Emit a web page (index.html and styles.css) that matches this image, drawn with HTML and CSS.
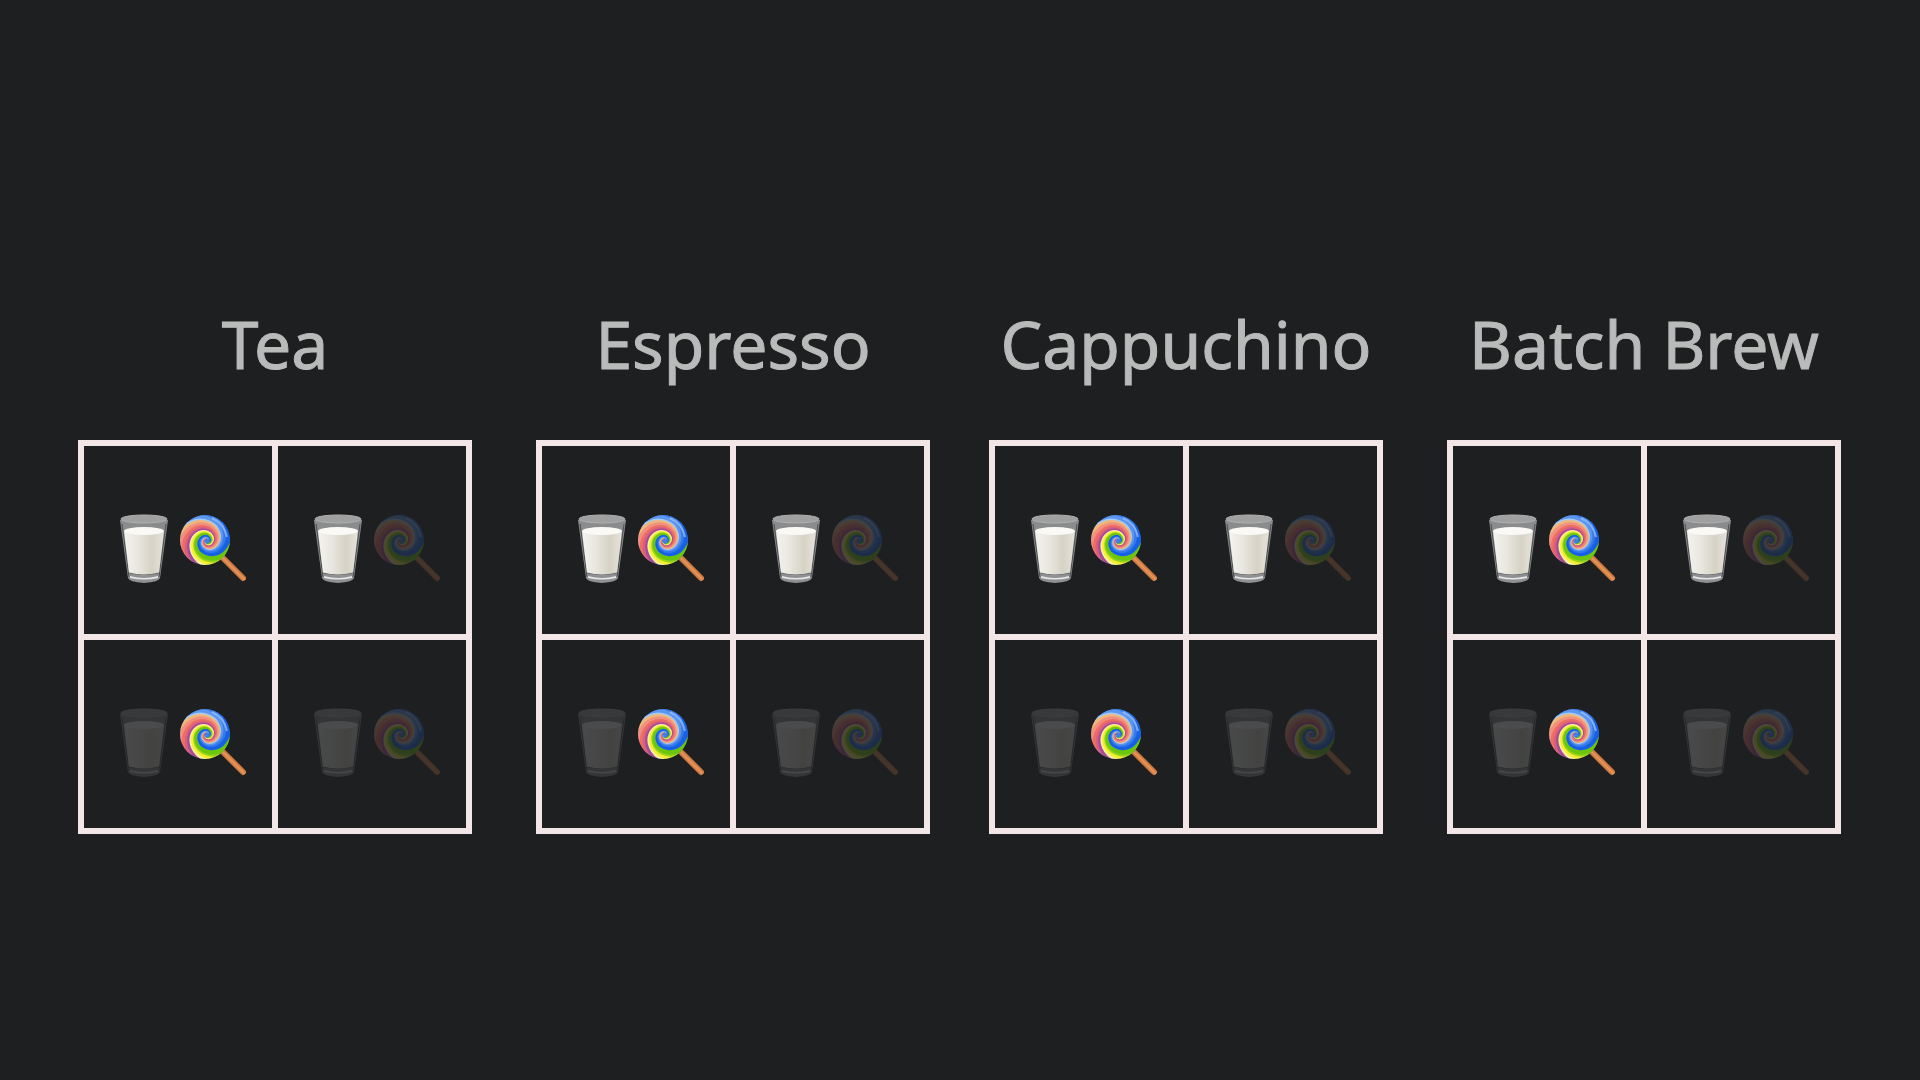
FILE: index.html
```html
<!DOCTYPE html>
<html lang="en">
<head>
<meta charset="utf-8">
<title>Drinks</title>
<link rel="stylesheet" href="styles.css">
</head>
<body>
<svg class="defs" aria-hidden="true">
  <defs>
    <linearGradient id="milk-fill" x1="0" x2="1" y1="0" y2="0">
      <stop offset="0" stop-color="#f4f3ee"/><stop offset=".35" stop-color="#e8e6df"/><stop offset=".7" stop-color="#d6d2c5"/><stop offset="1" stop-color="#e6e3da"/>
    </linearGradient>
    <linearGradient id="glass-fill" x1="0" x2="0" y1="0" y2="1">
      <stop offset="0" stop-color="#8a8b8c"/><stop offset="1" stop-color="#8f9091"/>
    </linearGradient>
    <linearGradient id="stick-fill" gradientUnits="userSpaceOnUse" x1="57" y1="52" x2="52" y2="57">
      <stop offset="0" stop-color="#b8652c"/><stop offset=".5" stop-color="#e8955a"/><stop offset="1" stop-color="#b96a33"/>
    </linearGradient>
    <filter id="soften" x="-10%" y="-10%" width="120%" height="120%"><feGaussianBlur stdDeviation=".6"/></filter>
    <clipPath id="candy-edge"><circle cx="26" cy="26" r="25"/></clipPath>
    <path id="arm" d="M32.800 0A30.500 30.500 0 0 1 18.400 18.400A24 24 0 0 1 0 20.600A19 19 0 0 1 -11.600 11.600A15.200 15.200 0 0 1 -13 0A12 12 0 0 1 -7.300 -7.300A9.600 9.600 0 0 1 0 -8.200A7.600 7.600 0 0 1 4.600 -4.600A6 6 0 0 1 5.200 0A4.800 4.800 0 0 1 2.900 2.900A3.800 3.800 0 0 1 0 3.200A3 3 0 0 1 -1.800 1.800L0 0L-2.300 2.300A3.800 3.800 0 0 0 0 4.100A4.800 4.800 0 0 0 3.700 3.700A6 6 0 0 0 6.500 0A7.600 7.600 0 0 0 5.800 -5.800A9.600 9.600 0 0 0 0 -10.300A12 12 0 0 0 -9.200 -9.200A15.200 15.200 0 0 0 -16.400 0A19 19 0 0 0 -14.600 14.600A24 24 0 0 0 0 26A30.500 30.500 0 0 0 23.200 23.200Z"/>
    <symbol id="milk" viewBox="0 0 70 70">
      <path d="M11 6L19 64Q20 68 35 69Q50 68 51 64L59 6Z" fill="url(#glass-fill)"/>
      <path d="M13 10L20 63M57 10L50 63" stroke="#4c4f51" stroke-width="1" fill="none"/>
      <path d="M15 17L20 59Q35 64 50 59L55 17Z" fill="url(#milk-fill)"/>
      <ellipse cx="35" cy="17" rx="20" ry="4" fill="#faf9f6"/>
      <path d="M20 59Q35 63 50 59" stroke="#66686a" fill="none"/>
      <path d="M21 62Q35 66 49 62L49 64Q35 67 21 64Z" fill="#e6e6e6"/>
      <ellipse cx="35" cy="5" rx="23" ry="4" fill="#a0a0a0" stroke="#b0b0b0"/>
    </symbol>
    <symbol id="lollipop" viewBox="0 0 70 70">
      <path d="M44 44L64 64" stroke="url(#stick-fill)" stroke-width="6" stroke-linecap="round"/>
      <g clip-path="url(#candy-edge)">
        <circle cx="26" cy="26" r="25" fill="#3c7ee8"/>
        <g filter="url(#soften)"><g transform="translate(28 27) rotate(-28)">
          <use href="#arm" transform="rotate(-40)" fill="#6cc60e"/>
          <use href="#arm" transform="rotate(-10)" fill="#6cc60e"/>
          <use href="#arm" transform="rotate(12)" fill="#98d41c"/>
          <use href="#arm" transform="rotate(30)" fill="#f4ee30"/>
          <use href="#arm" transform="rotate(58)" fill="#faf3a0"/>
          <use href="#arm" transform="rotate(78)" fill="#a8489c"/>
          <use href="#arm" transform="rotate(102)" fill="#d8607e"/>
          <use href="#arm" transform="rotate(125)" fill="#ee6e62"/>
          <use href="#arm" transform="rotate(150)" fill="#f29080"/>
          <use href="#arm" transform="rotate(180)" fill="#f0b878"/>
          <use href="#arm" transform="rotate(202)" fill="#a5cbf8"/>
          <use href="#arm" transform="rotate(215)" fill="#5c96f0"/>
          <use href="#arm" transform="rotate(245)" fill="#3478ea"/>
          <use href="#arm" transform="rotate(275)" fill="#1560e6"/>
        </g></g>
        <path d="M33 4Q45 9 48 23" stroke="#b8d6ff" stroke-width="2" fill="none" opacity=".6" filter="url(#soften)"/>
      </g>
    </symbol>
  </defs>
</svg>
<main class="menu">
  <div class="pair">
    <section class="drink">
      <h2 class="name">Tea</h2>
      <div class="options">
        <div class="cell"><svg class="icon"><use href="#milk"/></svg><svg class="icon"><use href="#lollipop"/></svg></div>
        <div class="cell"><svg class="icon"><use href="#milk"/></svg><svg class="icon off"><use href="#lollipop"/></svg></div>
        <div class="cell"><svg class="icon off"><use href="#milk"/></svg><svg class="icon"><use href="#lollipop"/></svg></div>
        <div class="cell"><svg class="icon off"><use href="#milk"/></svg><svg class="icon off"><use href="#lollipop"/></svg></div>
      </div>
    </section>
    <section class="drink">
      <h2 class="name">Espresso</h2>
      <div class="options">
        <div class="cell"><svg class="icon"><use href="#milk"/></svg><svg class="icon"><use href="#lollipop"/></svg></div>
        <div class="cell"><svg class="icon"><use href="#milk"/></svg><svg class="icon off"><use href="#lollipop"/></svg></div>
        <div class="cell"><svg class="icon off"><use href="#milk"/></svg><svg class="icon"><use href="#lollipop"/></svg></div>
        <div class="cell"><svg class="icon off"><use href="#milk"/></svg><svg class="icon off"><use href="#lollipop"/></svg></div>
      </div>
    </section>
  </div>
  <div class="pair">
    <section class="drink">
      <h2 class="name">Cappuchino</h2>
      <div class="options">
        <div class="cell"><svg class="icon"><use href="#milk"/></svg><svg class="icon"><use href="#lollipop"/></svg></div>
        <div class="cell"><svg class="icon"><use href="#milk"/></svg><svg class="icon off"><use href="#lollipop"/></svg></div>
        <div class="cell"><svg class="icon off"><use href="#milk"/></svg><svg class="icon"><use href="#lollipop"/></svg></div>
        <div class="cell"><svg class="icon off"><use href="#milk"/></svg><svg class="icon off"><use href="#lollipop"/></svg></div>
      </div>
    </section>
    <section class="drink">
      <h2 class="name">Batch Brew</h2>
      <div class="options">
        <div class="cell"><svg class="icon"><use href="#milk"/></svg><svg class="icon"><use href="#lollipop"/></svg></div>
        <div class="cell"><svg class="icon"><use href="#milk"/></svg><svg class="icon off"><use href="#lollipop"/></svg></div>
        <div class="cell"><svg class="icon off"><use href="#milk"/></svg><svg class="icon"><use href="#lollipop"/></svg></div>
        <div class="cell"><svg class="icon off"><use href="#milk"/></svg><svg class="icon off"><use href="#lollipop"/></svg></div>
      </div>
    </section>
  </div>
</main>
</body>
</html>
```
FILE: styles.css
```css
* { box-sizing: border-box; }

body {
  margin: 0;
  background: #1e1f21;
  color: #b9bbba;
  font-family: "Noto Sans", sans-serif;
}

.defs {
  position: absolute;
  width: 0;
  height: 0;
}

.menu {
  display: flex;
  align-items: center;
  gap: 59px;
  min-height: 100vh;
  padding: 52px 79px 0 78px;
}

.pair {
  display: flex;
  flex: 1;
  gap: 64px;
}

.drink {
  flex: 1;
  min-width: 0;
}

.name {
  margin: 0 0 52px;
  font-size: 66px;
  font-weight: 400;
  line-height: 90px;
  text-align: center;
  white-space: nowrap;
  -webkit-text-stroke: 1px currentColor;
}

.options {
  display: grid;
  grid-template-columns: 1fr 1fr;
  gap: 6px;
  padding: 6px;
  background: #f2e6e6;
}

.cell {
  display: flex;
  justify-content: center;
  align-items: center;
  aspect-ratio: 1;
  padding: 18px 0 0 2px;
  background: #1e1f21;
}

.icon {
  width: 70px;
  height: 70px;
}

.off { opacity: 0.2; }
```
